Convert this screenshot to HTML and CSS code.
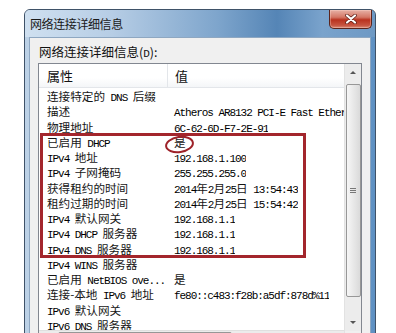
FILE: index.html
```html
<!DOCTYPE html>
<html lang="zh-CN">
<head>
    <meta charset="UTF-8">
    <meta name="viewport" content="width=device-width, initial-scale=1.0">
    <title>网络连接详细信息</title>
    <link rel="stylesheet" href="styles.css">
</head>
<body>
    <div class="window">
        <div class="titlebar">
            <span class="title">网络连接详细信息</span>
            <button class="close-btn" aria-label="关闭">
                <svg width="14" height="10" viewBox="0 0 14 10">
                    <path d="M3 1.5 L11 8.5 M11 1.5 L3 8.5" stroke="#5a1a12" stroke-width="3.6" stroke-linecap="round"/>
                    <path d="M3 1.5 L11 8.5 M11 1.5 L3 8.5" stroke="#ffffff" stroke-width="2.2" stroke-linecap="round"/>
                </svg>
            </button>
        </div>

        <div class="client">
            <p class="caption">网络连接详细信息(<u>D</u>):</p>

            <div class="listbox">
                <div class="list">
                    <div class="list-header">
                        <span class="hcell hcell-key">属性</span>
                        <span class="hcell hcell-val">值</span>
                    </div>
                    <div class="rows">
                        <div class="row"><span class="k">连接特定的<span class="m"> DNS </span>后缀</span><span class="v"></span></div>
                        <div class="row"><span class="k">描述</span><span class="v"><span class="m">Atheros AR8132 PCI-E Fast Ethernet Controller</span></span></div>
                        <div class="row"><span class="k">物理地址</span><span class="v"><span class="m">6C-62-6D-F7-2E-91</span></span></div>
                        <div class="row"><span class="k">已启用<span class="m"> DHCP</span></span><span class="v">是</span></div>
                        <div class="row"><span class="k"><span class="m">IPv4 </span>地址</span><span class="v"><span class="m">192.168.1.100</span></span></div>
                        <div class="row"><span class="k"><span class="m">IPv4 </span>子网掩码</span><span class="v"><span class="m">255.255.255.0</span></span></div>
                        <div class="row"><span class="k">获得租约的时间</span><span class="v"><span class="m">2014</span>年<span class="m">2</span>月<span class="m">25</span>日<span class="m"> 13:54:43</span></span></div>
                        <div class="row"><span class="k">租约过期的时间</span><span class="v"><span class="m">2014</span>年<span class="m">2</span>月<span class="m">25</span>日<span class="m"> 15:54:42</span></span></div>
                        <div class="row"><span class="k"><span class="m">IPv4 </span>默认网关</span><span class="v"><span class="m">192.168.1.1</span></span></div>
                        <div class="row"><span class="k"><span class="m">IPv4 DHCP </span>服务器</span><span class="v"><span class="m">192.168.1.1</span></span></div>
                        <div class="row"><span class="k"><span class="m">IPv4 DNS </span>服务器</span><span class="v"><span class="m">192.168.1.1</span></span></div>
                        <div class="row"><span class="k"><span class="m">IPv4 WINS </span>服务器</span><span class="v"></span></div>
                        <div class="row"><span class="k">已启用<span class="m"> NetBIOS ove...</span></span><span class="v">是</span></div>
                        <div class="row"><span class="k">连接-本地<span class="m"> IPv6 </span>地址</span><span class="v"><span class="m">fe80::c483:f28b:a5df:878d%11</span></span></div>
                        <div class="row"><span class="k"><span class="m">IPv6 </span>默认网关</span><span class="v"></span></div>
                        <div class="row"><span class="k"><span class="m">IPv6 DNS </span>服务器</span><span class="v"></span></div>
                    </div>
                    <div class="hscroll">
                        <span class="arrow-box"><span class="tri tri-left"></span></span>
                        <span class="hthumb"><span class="grip-v"></span></span>
                    </div>
                </div>

                <div class="vscroll">
                    <span class="arrow-box"><span class="tri tri-up"></span></span>
                    <span class="vtrack"><span class="vthumb"><span class="grip-h"></span></span></span>
                    <span class="arrow-box"><span class="tri tri-down"></span></span>
                    <span class="corner"></span>
                </div>

                <!-- 标注：红框和红圈 -->
                <div class="mark-box"></div>
                <div class="mark-ring"></div>
            </div>
        </div>
    </div>
</body>
</html>
```

FILE: styles.css
```css
body {
    margin: 0;
    background-color: #ffffff;
    font-family: 'Noto Sans CJK SC', 'Noto Sans', sans-serif;
    color: #000;
    overflow: hidden;
}
.window {
    margin: 9px 0 0 24px;
    width: 350px;
    height: 360px;
    border: 1px solid #3f5268;
    border-radius: 6px 6px 0 0;
    background: linear-gradient(90deg, #bcd1e6 0%, #9fbcda 50%, #5f91c3 100%);
}
.titlebar {
    height: 27px;
    display: flex;
    align-items: flex-start;
    background: linear-gradient(90deg, #cfe0f0 0%, #b6cde5 25%, #7ea5cc 55%, #5585b6 72%, #7aa3cc 85%, #6e99c4 100%);
    border-radius: 5px 5px 0 0;
}
.title {
    font-size: 12px;
    line-height: 14px;
    margin: 7px 0 0 5px;
    color: #1a1a1a;
    letter-spacing: -0.4px;
}
.close-btn {
    margin-left: auto;
    margin-right: 3px;
    width: 43px;
    height: 19px;
    padding: 0;
    border: 1px solid #5b241c;
    border-top: none;
    border-radius: 0 0 5px 5px;
    background: linear-gradient(180deg, #e7b1a6 0%, #d47766 40%, #b9321f 55%, #c65440 85%, #d98b78 100%);
    display: flex;
    align-items: center;
    justify-content: center;
    box-shadow: inset 0 0 0 1px rgba(255, 220, 210, 0.35);
}
.client {
    margin: 0 4px;
    height: 320px;
    background-color: #f0f0f0;
    border: 1px solid #8ea7c1;
    padding: 0 8px 0 8px;
}
.caption {
    margin: 6px 0 1px 1px;
    font-size: 12.5px;
    line-height: 16px;
    color: #111;
}
.caption u {
    text-decoration: none;
    font-family: 'Liberation Mono', monospace;
    font-size: 11px;
}
.listbox {
    position: relative;
    display: flex;
    height: 284px;
    border: 1px solid #828790;
    background-color: #ffffff;
}
.list {
    flex: 1;
    min-width: 0;
    display: flex;
    flex-direction: column;
}
.list-header {
    height: 23px;
    display: flex;
    align-items: center;
    border-bottom: 1px solid #e3e6ea;
    background: linear-gradient(180deg, #ffffff 0%, #ffffff 60%, #f4f6f8 100%);
    flex-shrink: 0;
}
.hcell {
    font-size: 13px;
    line-height: 23px;
    height: 23px;
    color: #111;
}
.hcell-key {
    width: 120px;
    padding-left: 8px;
    border-right: 1px solid #e3e6ea;
}
.hcell-val {
    padding-left: 7px;
}
.rows {
    flex: 1;
    overflow: hidden;
    padding-top: 1px;
}
.row {
    display: flex;
    height: 15.25px;
    line-height: 15.25px;
    font-size: 11.6px;
    white-space: nowrap;
    color: #151515;
}
.k {
    width: 128px;
    flex-shrink: 0;
    padding-left: 8px;
    box-sizing: border-box;
    overflow: visible;
}
.v {
    padding-left: 7px;
    overflow: hidden;
}
.v-date {
    letter-spacing: -0.3px;
}
.m {
    font-family: 'Liberation Mono', monospace;
    font-size: 11px;
    letter-spacing: -1.05px;
    white-space: pre;
    color: #000;
}
.hscroll {
    height: 17px;
    flex-shrink: 0;
    display: flex;
    align-items: center;
    background-color: #ececec;
    border-top: 1px solid #e0e0e0;
}
.arrow-box {
    width: 16px;
    height: 17px;
    display: flex;
    align-items: center;
    justify-content: center;
    flex-shrink: 0;
}
.tri {
    width: 0;
    height: 0;
}
.tri-up {
    border-left: 3px solid transparent;
    border-right: 3px solid transparent;
    border-bottom: 3px solid #555;
}
.tri-down {
    border-left: 3px solid transparent;
    border-right: 3px solid transparent;
    border-top: 3px solid #555;
}
.tri-left {
    border-top: 3px solid transparent;
    border-bottom: 3px solid transparent;
    border-right: 3px solid #555;
}
.hthumb {
    margin-left: 3px;
    width: 174px;
    height: 15px;
    border: 1px solid #979797;
    border-radius: 2px;
    box-sizing: border-box;
    background: linear-gradient(180deg, #f6f6f6, #dcdcdc);
    display: flex;
    align-items: center;
    justify-content: center;
}
.grip-v {
    width: 5px;
    height: 6px;
    background: repeating-linear-gradient(90deg, #777 0 1px, transparent 1px 2px);
}
.vscroll {
    width: 16px;
    flex-shrink: 0;
    display: flex;
    flex-direction: column;
    background-color: #ececec;
    border-left: 1px solid #e2e2e2;
}
.vtrack {
    flex: 1;
    display: flex;
    justify-content: center;
}
.vthumb {
    margin-top: 3px;
    width: 15px;
    height: 213px;
    border: 1px solid #979797;
    border-radius: 2px;
    box-sizing: border-box;
    background: linear-gradient(90deg, #f6f6f6, #dadada);
    display: flex;
    align-items: center;
    justify-content: center;
}
.grip-h {
    width: 6px;
    height: 5px;
    background: repeating-linear-gradient(180deg, #777 0 1px, transparent 1px 2px);
}
.corner {
    height: 17px;
    background-color: #f0f0f0;
}
.mark-box {
    position: absolute;
    left: 1px;
    top: 69px;
    width: 266px;
    height: 125px;
    border: 3px solid #a3262c;
    box-sizing: border-box;
}
.mark-ring {
    position: absolute;
    left: 126px;
    top: 72px;
    width: 29px;
    height: 17px;
    border: 2.5px solid #9e2229;
    border-radius: 50%;
    box-sizing: border-box;
    transform: rotate(-8deg);
}
```
